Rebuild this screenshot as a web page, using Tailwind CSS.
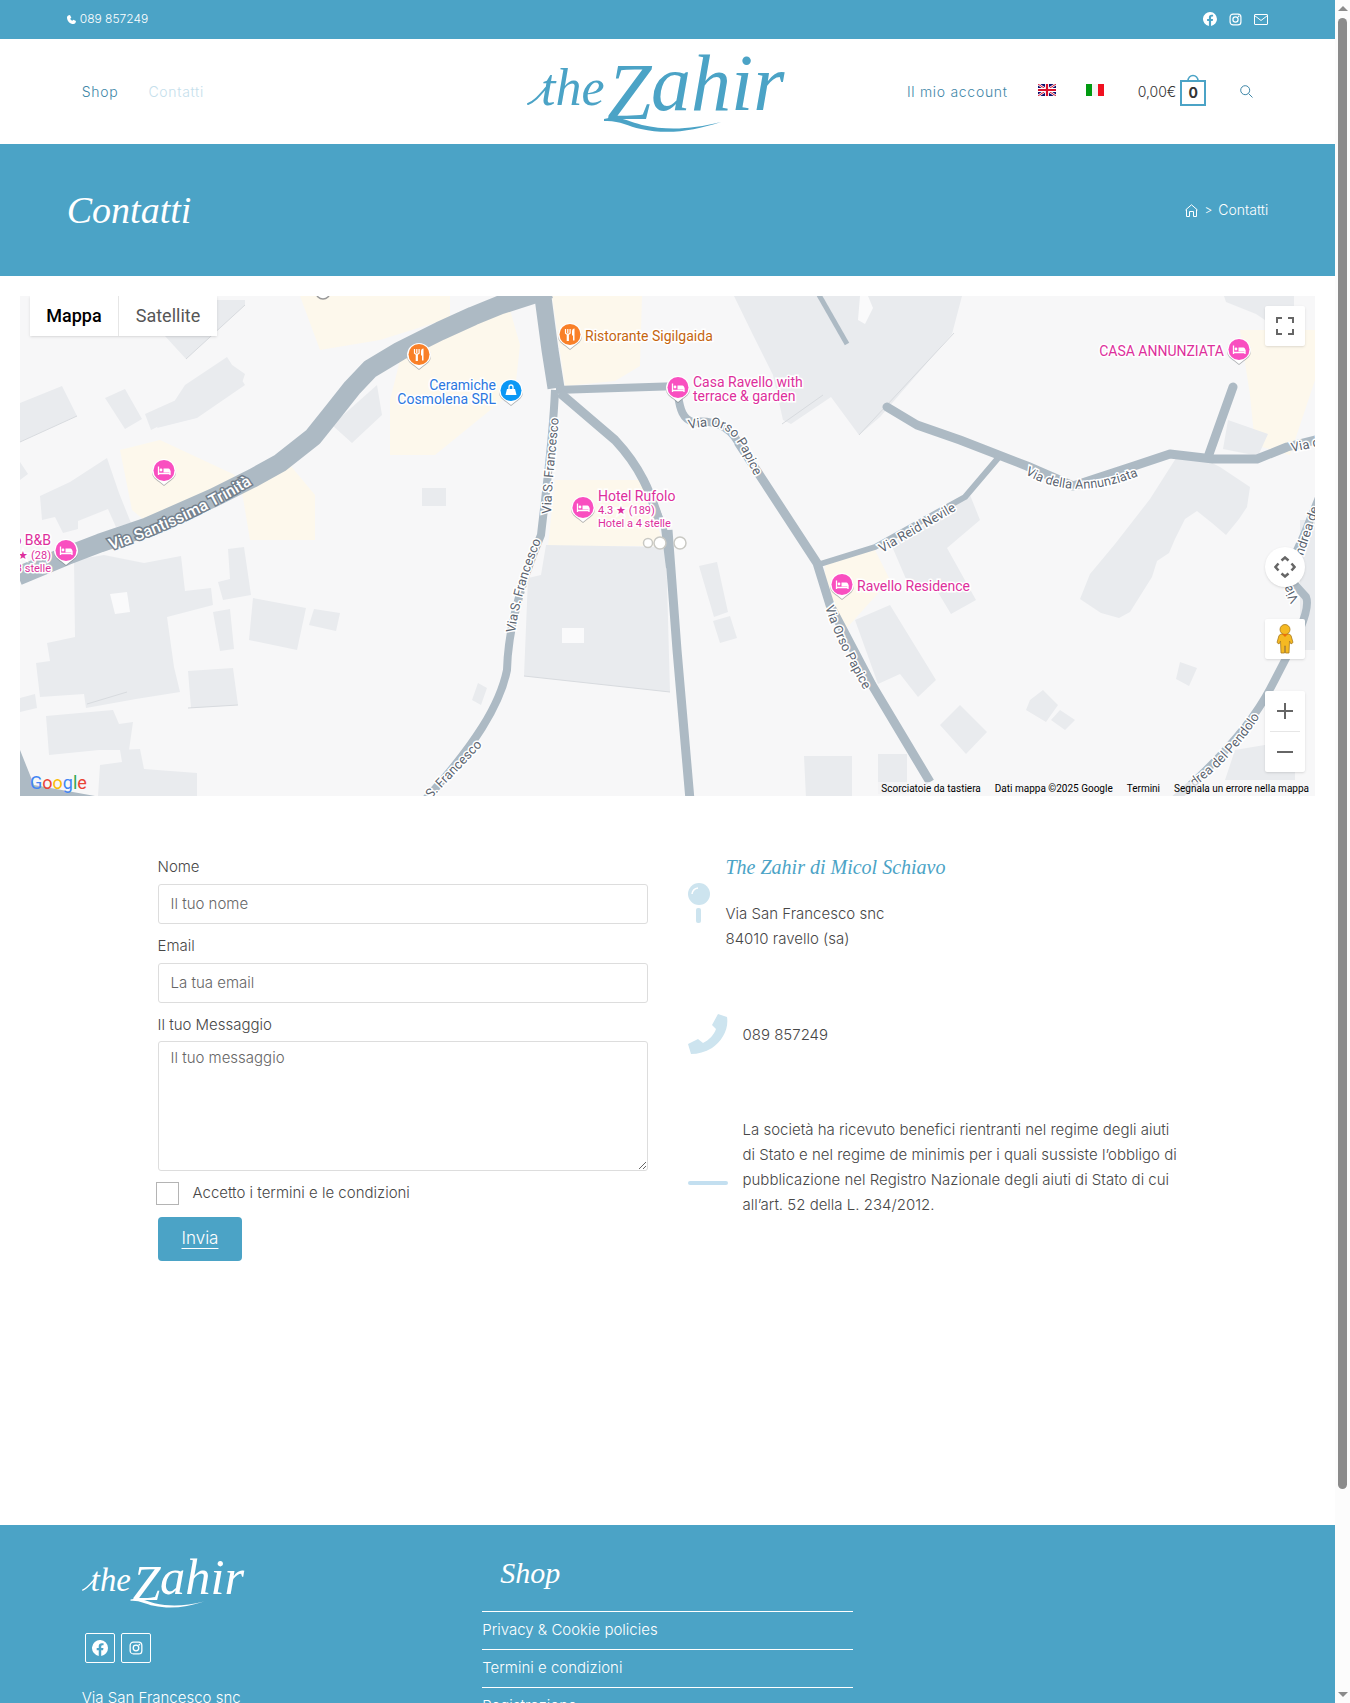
<!DOCTYPE html>
<html lang="it">
<head>
  <meta charset="UTF-8" />
  <meta name="viewport" content="width=device-width, initial-scale=1.0" />
  <title>Contatti - The Zahir</title>

  <!-- Tailwind CSS -->
  <script src="https://cdn.jsdelivr.net/npm/@tailwindcss/browser@4"></script>
</head>

<body class="h-screen overflow-hidden flex bg-white text-[15px] font-light text-[#474747] font-['Inter','Liberation_Sans',sans-serif]">

  <!-- Shared shapes -->
  <svg class="hidden">
    <defs>
      <symbol id="facebook" viewBox="0 0 24 24">
        <path fill="currentColor" d="M24 12a12 12 0 1 0-13.900 11.850v-8.380H7.050V12h3.050V9.360c0-3 1.790-4.670 4.530-4.670 1.310 0 2.690.240 2.690.240v2.950h-1.520c-1.490 0-1.950.930-1.950 1.870V12h3.330l-.530 3.470h-2.800v8.380A12 12 0 0 0 24 12z" />
      </symbol>
      <symbol id="instagram" viewBox="0 0 24 24">
        <g fill="none" stroke="currentColor" stroke-width="2.200">
          <rect x="2" y="2" width="20" height="20" rx="5.500" />
          <circle cx="12" cy="12" r="4.800" />
        </g>
        <circle cx="17.800" cy="6.200" r="1.500" fill="currentColor" />
      </symbol>
      <symbol id="phone" viewBox="0 0 24 24">
        <path fill="currentColor" d="M3 1.500 8 0l3.500 7-3 3c1 2.500 3 4.500 5.500 5.500l3-3 7 3.500-1.500 5C21 23 19 24 17 24 8 23.500.5 16 0 7c0-2 1-4.500 3-5.500z" />
      </symbol>
      <symbol id="logo" viewBox="0 0 281 80">
        <g fill="currentColor" font-family="Liberation Serif, serif" font-style="italic">
          <text x="14" y="53" font-size="52">the</text>
          <text x="80" y="67" font-size="80">Z</text>
          <text x="124" y="58" font-size="80">ahir</text>
        </g>
        <path fill="currentColor" d="M77 67c14-4 24 2 38 6 27 6 50 4 79-3-28 9-53 13-80 7-14-3-22-9-37-8z" />
        <path fill="none" stroke="currentColor" stroke-width="2" stroke-linecap="round" d="M1 52c6-2 10-7 18-16" />
      </symbol>
      <symbol id="pin" viewBox="0 0 26 28" overflow="visible">
        <path d="M13 1a12 12 0 0 1 12 12c0 5-4 8-7 10l-5 4-5-4c-3-2-7-5-7-10A12 12 0 0 1 13 1z" fill="#7a7f84" opacity=".6" transform="translate(0 1)" />
        <path d="M13 1a12 12 0 0 1 12 12c0 5-4 8-7 10l-5 4-5-4c-3-2-7-5-7-10A12 12 0 0 1 13 1z" fill="#fff" />
        <circle cx="13" cy="12.500" r="10.500" fill="currentColor" />
      </symbol>
      <symbol id="hotel" viewBox="0 0 26 28" overflow="visible">
        <use href="#pin" width="26" height="28" />
        <path d="M7.500 8.500V17M7.500 15.500h11.500M19 17v-4.500" stroke="#fff" stroke-width="1.300" fill="none" />
        <circle cx="10" cy="12" r="1.400" fill="#fff" />
        <path d="M12.500 10.500h5a1.500 1.500 0 0 1 1.500 1.500v2.500h-6.500z" fill="#fff" />
      </symbol>
      <symbol id="food" viewBox="0 0 26 28" overflow="visible">
        <use href="#pin" width="26" height="28" />
        <path d="M8.500 7v4.200l1.800 1.300v6h1v-6l1.800-1.300V7M10.800 7v4.500" stroke="#fff" stroke-width="1.200" fill="none" />
        <path d="M15 9.500c0-2 1-3 2.500-3v12h-1.500v-5H15z" fill="#fff" />
      </symbol>
    </defs>
  </svg>

  <div class="flex-1 min-w-0 overflow-hidden">

    <!-- Top bar -->
    <div class="h-[39px] bg-[#4ba3c6] text-white">
      <div class="w-[90%] mx-auto h-[38px] flex items-center justify-between">
        <a href="tel:089857249" class="flex items-center gap-1 text-xs">
          <svg class="size-[9px]"><use href="#phone" /></svg>
          089 857249
        </a>
        <div class="flex items-center gap-3">
          <a href="#" aria-label="Facebook"><svg class="size-[14px]"><use href="#facebook" /></svg></a>
          <a href="#" aria-label="Instagram"><svg class="size-[13px]"><use href="#instagram" /></svg></a>
          <a href="#" aria-label="Email">
            <svg class="w-[14px] h-[11px]" viewBox="0 0 14 11" fill="none" stroke="currentColor"><rect x=".5" y=".5" width="13" height="10" rx=".5" /><path d="m.5 1.500 6.500 5 6.500-5" /></svg>
          </a>
        </div>
      </div>
    </div>

    <!-- Header -->
    <header class="w-[90%] mx-auto h-[105px] grid grid-cols-[1fr_auto_1fr] items-center text-sm text-[#3f87a8]">
      <nav class="flex gap-[30px] pl-[15px] tracking-wider">
        <a href="#">Shop</a>
        <a href="#" class="text-[#c5e0ec]">Contatti</a>
      </nav>
      <a href="#" aria-label="The Zahir" class="text-[#4ba3c6]"><svg class="w-[281px] h-20"><use href="#logo" /></svg></a>
      <div class="flex items-center justify-end pr-[15px]">
        <a href="#" class="tracking-wider mr-[30px]">Il mio account</a>
        <a href="#" aria-label="English" class="mr-[30px] pb-[3px]">
          <svg class="w-[18px] h-3" viewBox="0 0 18 12">
            <path fill="#10106e" d="M0 0h18v12H0z" />
            <path stroke="#fff" stroke-width="2.400" d="m0 0 18 12M18 0 0 12" />
            <path stroke="#d8102c" d="m0 0 18 12M18 0 0 12" />
            <path stroke="#fff" stroke-width="4" d="M9 0v12M0 6h18" />
            <path stroke="#d8102c" stroke-width="2.200" d="M9 0v12M0 6h18" />
          </svg>
        </a>
        <a href="#" aria-label="Italiano" class="mr-[34px] pb-[3px]">
          <svg class="w-[18px] h-3" viewBox="0 0 18 12"><path fill="#009a10" d="M0 0h6v12H0z" /><path fill="#f4f4f4" d="M6 0h6v12H6z" /><path fill="#f01020" d="M12 0h6v12h-6z" /></svg>
        </a>
        <a href="#" class="flex items-center gap-1 text-[#333] mr-[34px]">
          0,00€
          <span class="relative mt-[3px] size-[26px] border-2 border-[#4ba3c6] flex items-center justify-center font-bold">
            <svg class="absolute -top-2 left-[5px] w-3 h-2" viewBox="0 0 12 8" fill="none" stroke="#4ba3c6" stroke-width="1.500"><path d="M1 7a5 5.500 0 0 1 10 0" /></svg>
            0
          </span>
        </a>
        <button aria-label="Cerca"><svg class="size-[13px]" viewBox="0 0 13 13" fill="none" stroke="currentColor"><circle cx="5.200" cy="5.200" r="4.500" /><path d="m8.500 8.500 4 4" /></svg></button>
      </div>
    </header>

    <!-- Page title -->
    <div class="bg-[#4ba3c6] text-white">
      <div class="w-[90%] mx-auto h-[132px] flex items-center justify-between">
        <h1 class="font-['Liberation_Serif',serif] font-normal italic text-[38px] leading-10">Contatti</h1>
        <nav class="flex items-center gap-[6px] text-sm">
          <a href="#" aria-label="Home"><svg class="size-[13px]" viewBox="0 0 13 13" fill="none" stroke="currentColor"><path d="M.5 6 6.500.800 12.500 6M1.500 5.500v7h3v-5h4v5h3v-7" /></svg></a>
          <span class="text-xs">&gt;</span>
          <a href="#">Contatti</a>
        </nav>
      </div>
    </div>

    <!-- Map -->
    <div class="px-5 pt-5">
      <div class="relative h-[500px] overflow-hidden bg-[#f7f7f8] font-normal font-['Roboto',sans-serif]">
        <svg class="w-full h-full" viewBox="20 296 1295 500" preserveAspectRatio="xMidYMid slice" font-family="Roboto, sans-serif">
          <!-- commercial areas -->
          <g fill="#fdf8ec">
            <path d="M120 450 160 440 235 475 215 505 150 525 132 510zM240 480l50-15 25 30v45h-65zM300 296h150v22l-70 22-60 10zM400 360l80-40 30-10 10 35-5 45-80 65h-45v-55zM552 296h90l-2 70-25 15-50 5zM555 480h85l25 66H548zM825 562l50-12 15 30-45 50-20-20zM1240 330h75v50l-25 75-35-10-5-50z" />
          </g>
          <!-- buildings -->
          <g fill="#e9ebee">
            <path d="M165 336 215 300h30v5l-59 54zM20 403l42-17 15 30-57 26zM105 398l20-9 17 30-17 10zM145 414l40-18 40-36 20 14-4 12-46 31-12-3-32 16zM185 385l42-28 18 28-48 33-40 10zM20 462l8 12-8 6zM40 496l30-14 37-24 12 35 12 30-15 4-8-18-30 12v8l-15 4-8-16-13 3zM332 425l45-40 5 30-30 28z" />
            <path d="M74 560l30-5 40 8 37-7 4 35 26-3 2 17-46 12 7 50 6 25-44 7-50 9-2-14-44 3-4-34 14-2-3-18 28-6zM218 582l12-3-2-30 16-2 7 48-28 5zM213 612l17-3 4 40-14 2zM253 598l53 10-9 42-48-10zM314 609l26 4-4 18-27-6zM188 671l45-3 5 37-47 3zM20 698l15-4 2 14-17 4zM46 716l67-6 6 14 14-2-4 28-30 0-50 5zM100 765l22-3-2-12 20-1 4 20 53 4v23H98z" />
            <path d="M422 488h24v18h-24zM734 296h228l-10 38-72 83-21 18-28-38-40 27-8-4-10-45-20-40zM546 545l120 2 4 145-146-16 4-98 13-3zM699 566l18-4 11 50-14 5zM713 621l17-5 7 22-17 5zM478 683l9 5-6 17-9-5zM804 756h48v42h-46zM878 754h29v40h-29z" />
            <path d="M950 510l20-15 10 25-33 28 29 52-25 14-15-25-30-10-15-35zM855 620l35-15 46 75-18 17-18-23-22 10zM940 725l20-20 27 27-21 22zM1030 700l13-10 15 15-12 17-20-12zM1060 710l15 10-10 10-14-10zM1180 662l17 6-8 18-13-7zM1228 420l40 14-10 22-35-7z" />
            <path d="M1178 455l22 2 20 10 30 20-3 20-8 12-13 16-14-12-15-12-12 8 -10 20 -6 14-12 8-5 16-22 35-11 6-18-5-21-14 10-25 25-30 35-45zM1224 296h70v50l-20-20-18-12-30-12zM1300 520h15v130h-15zM1235 750l60-10v40h-70z" />
          </g>
          <path fill="#fafafb" d="M110 594l17-2 3 20-15 2zM562 628h22v15h-22zM860 296h8l5 12-8 16-7-4z" />
          <path fill="none" stroke="#d8dbdf" d="M186 359 245 305M782 424 823 395M859 435 954 333M524 676 670 692M20 442 77 416M87 704 127 692M188 708l50-3" />
          <!-- roads -->
          <g fill="none" stroke="#adbac4" stroke-linejoin="round">
            <path stroke-width="19" d="M18 576 66 556 100 543 147 527 213 498 253 478 280 463 313 437 333 412 352 388 370 369 400 351 440 331 473 316 500 305 550 289" />
            <path stroke-width="17" d="M542 290 550 350 556 388" />
            <path stroke-width="8" d="M555 390C553 440 546 490 541 535 520 585 508 630 507 670 500 705 475 745 425 800M556 390 680 386M678 395c2 15 5 24 15 27 20-2 35 3 45 20" />
            <path stroke-width="9" d="M560 393 615 440C645 472 652 500 659 520M668 530 677 650 690 800M738 442 817 563 830 605 872 685 930 782" />
            <path stroke-width="6" d="m656 508 8 20 5 40M817 565l58-18 90-50 34-40" />
            <path stroke-width="9" d="m887 407 30 18 43 15 67 26 46 20 64-21 33-11 43 5 44 0 30-12 28-7M1208 457 1233 387" stroke-linecap="round" />
            <path stroke-width="5" d="m819 295 28 49" />
            <path stroke-width="8" d="m1320 495-16 40-18 40 20 22c6 14-14 50-36 92-20 38-55 75-95 110" />
          </g>
          <path fill="#adbac4" d="M20 750 34 785 95 796H20z" />
          <g fill="#fff" stroke="#c9c9c4" stroke-width="1.500">
            <circle cx="648" cy="543" r="4.500" /><circle cx="660" cy="543" r="6" /><circle cx="680" cy="543" r="6" /><circle cx="323" cy="292" r="7" stroke="#999" />
          </g>

          <!-- street names -->
          <defs>
            <path id="s1" d="M111 550 Q195 522 275 470" />
            <path id="s2" d="M551 514C552 480 556 450 559 415" />
            <path id="s3" d="M515 633C520 597 530 567 543 536" />
            <path id="s4" d="M431 799 490 737" />
            <path id="s5" d="M689 429C732 420 735 435 758 484" />
            <path id="s6" d="M825 607 C836 640 852 670 871 702" />
            <path id="s7" d="M882 553 960 508" />
            <path id="s8" d="M1025 474 Q1075 504 1145 473" />
            <path id="s9" d="M1292 452 1330 444" />
            <path id="s10" d="M1194 787 Q1235 758 1267 705" />
            <path id="s11" d="M1303 556 1325 490" />
            <path id="s12" d="M1299 600 1285 575" />
          </defs>
          <g font-size="13" fill="#5b6470" stroke="#fff" stroke-width="3" paint-order="stroke">
            <text font-size="16" font-weight="500" fill="#fff" stroke="#73808d"><textPath href="#s1">Via Santissima Trinità</textPath></text>
            <text><textPath href="#s2">Via S. Francesco</textPath></text>
            <text><textPath href="#s3">Via S. Francesco</textPath></text>
            <text><textPath href="#s4">S. Francesco</textPath></text>
            <text><textPath href="#s5">Via Orso Papice</textPath></text>
            <text><textPath href="#s6">Via Orso Papice</textPath></text>
            <text><textPath href="#s7">Via Reid Nevile</textPath></text>
            <text><textPath href="#s8">Via della Annunziata</textPath></text>
            <text><textPath href="#s9">Via d</textPath></text>
            <text><textPath href="#s10">drea del Pendolo</textPath></text>
            <text><textPath href="#s11">ndrea de</textPath></text>
            <text><textPath href="#s12">Via</textPath></text>
          </g>

          <!-- places -->
          <g color="#f94fc0">
            <use href="#hotel" x="151" y="458" width="26" height="28" />
            <use href="#hotel" x="53" y="538" width="26" height="28" />
            <use href="#hotel" x="665" y="375" width="26" height="28" />
            <use href="#hotel" x="570" y="495" width="26" height="28" />
            <use href="#hotel" x="829" y="572" width="26" height="28" />
            <use href="#hotel" x="1226" y="337" width="26" height="28" />
          </g>
          <g color="#f98028">
            <use href="#food" x="406" y="342" width="26" height="28" />
            <use href="#food" x="557" y="322" width="26" height="28" />
          </g>
          <use href="#pin" x="498" y="378" width="26" height="28" color="#0b98f5" />
          <path fill="#fff" d="M507 389h8l1.500 6h-11z" />
          <path fill="none" stroke="#fff" stroke-width="1.300" d="M509 389v-2a2 2 0 0 1 4 0v2" />
          <g font-size="14" stroke="#fff" stroke-width="3" paint-order="stroke" fill="#dd2f9c">
            <g fill="#c5650f"><text x="585" y="341">Ristorante Sigilgaida</text></g>
            <g fill="#2c77e0" text-anchor="end"><text x="496" y="390">Ceramiche</text><text x="496" y="404">Cosmolena SRL</text></g>
            <text x="693" y="387">Casa Ravello with</text>
            <text x="693" y="401">terrace &amp; garden</text>
            <text x="598" y="501">Hotel Rufolo</text>
            <text x="857" y="591">Ravello Residence</text>
            <text x="1224" y="356" text-anchor="end">CASA ANNUNZIATA</text>
            <text x="51" y="545" text-anchor="end">o B&amp;B</text>
            <g font-size="11">
              <text x="598" y="514">4.3 ★ (189)</text>
              <text x="598" y="527">Hotel a 4 stelle</text>
              <text x="51" y="559" text-anchor="end">★ (28)</text>
              <text x="51" y="572" text-anchor="end">3 stelle</text>
            </g>
          </g>
        </svg>

        <!-- Map controls -->
        <div class="absolute top-0 left-[10px] flex h-10 bg-white shadow text-lg">
          <button class="w-[89px] font-medium text-black border-r border-[#e6e6e6]">Mappa</button>
          <button class="w-[98px] text-[#565656]">Satellite</button>
        </div>
        <div class="absolute right-[10px] top-[10px] bottom-6 w-10 flex flex-col text-[#666]">
          <button aria-label="Schermo intero" class="size-10 bg-white shadow flex items-center justify-center rounded-xs">
            <svg class="size-[18px]" viewBox="0 0 18 18" fill="none" stroke="currentColor" stroke-width="2"><path d="M1 6V1h5M12 1h5v5M17 12v5h-5M6 17H1v-5" /></svg>
          </button>
          <button aria-label="Controlli fotocamera" class="mt-auto size-10 bg-white shadow rounded-full flex items-center justify-center">
            <svg class="size-[22px]" viewBox="0 0 22 22" fill="none" stroke="currentColor" stroke-width="2.500"><path d="M7.500 4.500 11 1.500l3.500 3M7.500 17.500l3.500 3 3.500-3M4.500 7.500l-3 3.500 3 3.500M17.500 7.500l3 3.500-3 3.500" /></svg>
          </button>
          <button aria-label="Street View" class="mt-8 size-10 bg-white shadow rounded-xs flex items-center justify-center">
            <svg class="w-[18px] h-[30px]" viewBox="0 0 18 30" fill="#f5b922" stroke="#a87a1c" stroke-width=".8"><path d="M5 10h8l2 1.500 2 7-2 1.500-1.500-3-.5 12H9.500V22h-1v7H5l-.5-12L3 20l-2-1.500 2-7z" /><circle cx="9" cy="5.500" r="5" /><path d="m6 10 3 3 3-3" fill="#e8710a" stroke="none" /></svg>
          </button>
          <div class="mt-8 bg-white shadow rounded-xs flex flex-col items-center">
            <button aria-label="Zoom avanti" class="size-10 flex items-center justify-center"><svg class="size-4" viewBox="0 0 16 16" stroke="currentColor" stroke-width="2"><path d="M8 0v16M0 8h16" /></svg></button>
            <span class="w-[30px] h-px bg-[#e6e6e6]"></span>
            <button aria-label="Zoom indietro" class="size-10 flex items-center justify-center"><svg class="size-4" viewBox="0 0 16 16" stroke="currentColor" stroke-width="2"><path d="M0 8h16" /></svg></button>
          </div>
        </div>
        <a href="#" class="absolute left-[10px] bottom-0 text-[18px] leading-[26px]"><span class="text-[#4285f4]">G</span><span class="text-[#ea4335]">o</span><span class="text-[#fbbc04]">o</span><span class="text-[#4285f4]">g</span><span class="text-[#34a853]">l</span><span class="text-[#ea4335]">e</span></a>
        <div class="absolute right-0 bottom-0 px-[6px] flex gap-[14px] bg-[#f7f7f8]/70 text-[10px] leading-[14px] text-black">
          <button>Scorciatoie da tastiera</button>
          <span>Dati mappa ©2025 Google</span>
          <a href="#">Termini</a>
          <a href="#">Segnala un errore nella mappa</a>
        </div>
      </div>
    </div>

    <!-- Contact form and details -->
    <main class="max-w-[1020px] min-h-[729px] mx-auto pt-[59px] grid grid-cols-2 gap-10 items-start">
      <form class="flex flex-col items-start">
        <label for="nome" class="leading-6 mb-[5px]">Nome</label>
        <input id="nome" type="text" placeholder="Il tuo nome" class="w-full h-10 px-3 pb-[2px] mb-[10px] border border-[#ddd] rounded-[3px] placeholder:text-[#666]" />
        <label for="email" class="leading-6 mb-[5px]">Email</label>
        <input id="email" type="email" placeholder="La tua email" class="w-full h-10 px-3 pb-[2px] mb-[10px] border border-[#ddd] rounded-[3px] placeholder:text-[#666]" />
        <label for="messaggio" class="leading-6 mb-1">Il tuo Messaggio</label>
        <textarea id="messaggio" placeholder="Il tuo messaggio" class="w-full h-[130px] px-3 py-1 leading-6 border border-[#ddd] rounded-[3px] placeholder:text-[#666]"></textarea>
        <div class="flex items-center gap-[14px] -ml-[2px] mt-[11px] mb-[10px]">
          <input id="termini" type="checkbox" class="appearance-none size-[23px] border border-[#b4b4b4] bg-white" />
          <label for="termini">Accetto i termini e le condizioni</label>
        </div>
        <button type="submit" class="h-11 px-6 mt-[2px] rounded-[4px] bg-[#4ba3c6] text-white text-[17px] underline underline-offset-4">Invia</button>
      </form>

      <div class="flex flex-col gap-[62px] leading-[25px] -ml-px">
        <div class="flex items-center gap-[15px]">
          <svg class="w-6 h-10 text-[#cde4ef]" viewBox="0 0 24 40"><circle cx="12" cy="11" r="11" fill="currentColor" /><rect x="9" y="25" width="5" height="15" rx="2" fill="currentColor" /><path d="M5 11a7 7 0 0 1 6-6" stroke="#fff" stroke-width="1.500" fill="none" /></svg>
          <div>
            <h2 class="font-['Liberation_Serif',serif] font-normal italic text-xl leading-6 text-[#4ba3c6] mb-[22px]">The Zahir di Micol Schiavo</h2>
            <p>Via San Francesco snc<br />84010 ravello (sa)</p>
          </div>
        </div>
        <div class="flex items-center gap-[14px]">
          <svg class="size-[42px] text-[#cde4ef]" viewBox="0 0 42 42"><path fill="currentColor" d="M31 1l9 3c2 12-5 24-15 31-7 4-14 6-21 6L1 31l10-5 5 4c6-3 11-8 13-14l-4-4z" /></svg>
          <p>089 857249</p>
        </div>
        <div class="flex items-center gap-[14px]">
          <svg class="w-[42px] h-[6px] mt-8 shrink-0 text-[#c3dff0]" viewBox="0 0 42 6"><rect x="1" y="1" width="40" height="4" rx="2" fill="currentColor" /></svg>
          <p class="whitespace-nowrap">La società ha ricevuto benefici rientranti nel regime degli aiuti<br />di Stato e nel regime de minimis per i quali sussiste l’obbligo di<br />pubblicazione nel Registro Nazionale degli aiuti di Stato di cui<br />all’art. 52 della L. 234/2012.</p>
        </div>
      </div>
    </main>

    <!-- Footer -->
    <footer class="bg-[#4ba3c6] text-white">
      <div class="w-[90%] mx-auto pt-8 pb-10 grid grid-cols-3">
        <div class="px-[15px]">
          <a href="#" aria-label="The Zahir" class="block"><svg class="w-[177px] h-[51px]"><use href="#logo" /></svg></a>
          <div class="flex gap-[6px] mt-[25px] mb-[22px] ml-[3px]">
            <a href="#" aria-label="Facebook" class="size-[30px] border border-white rounded-xs flex items-center justify-center"><svg class="size-4"><use href="#facebook" /></svg></a>
            <a href="#" aria-label="Instagram" class="size-[30px] border border-white rounded-xs flex items-center justify-center"><svg class="size-[14px]"><use href="#instagram" /></svg></a>
          </div>
          <p class="leading-[25px]">Via San Francesco snc<br />84010 ravello (sa)</p>
        </div>
        <div class="px-[15px]">
          <h4 class="font-['Liberation_Serif',serif] font-normal italic text-[30px] leading-8 pl-[18px] mb-[22px]">Shop</h4>
          <ul>
            <li class="border-t border-white h-[38px] leading-9"><a href="#">Privacy &amp; Cookie policies</a></li>
            <li class="border-t border-white h-[38px] leading-9"><a href="#">Termini e condizioni</a></li>
            <li class="border-y border-white h-[38px] leading-9"><a href="#">Registrazione</a></li>
          </ul>
        </div>
      </div>
    </footer>
  </div>

  <!-- Scrollbar -->
  <div class="w-[15px] shrink-0 bg-[#fcfcfc] flex flex-col items-center py-[6px]">
    <span class="border-x-[5px] border-x-transparent border-b-[5px] border-b-[#8b8b8b]"></span>
    <div class="mt-[7px] w-[9px] h-[87%] rounded-full bg-[#8b8b8b]"></div>
    <span class="mt-auto border-x-[5px] border-x-transparent border-t-[5px] border-t-[#8b8b8b]"></span>
  </div>

</body>
</html>
